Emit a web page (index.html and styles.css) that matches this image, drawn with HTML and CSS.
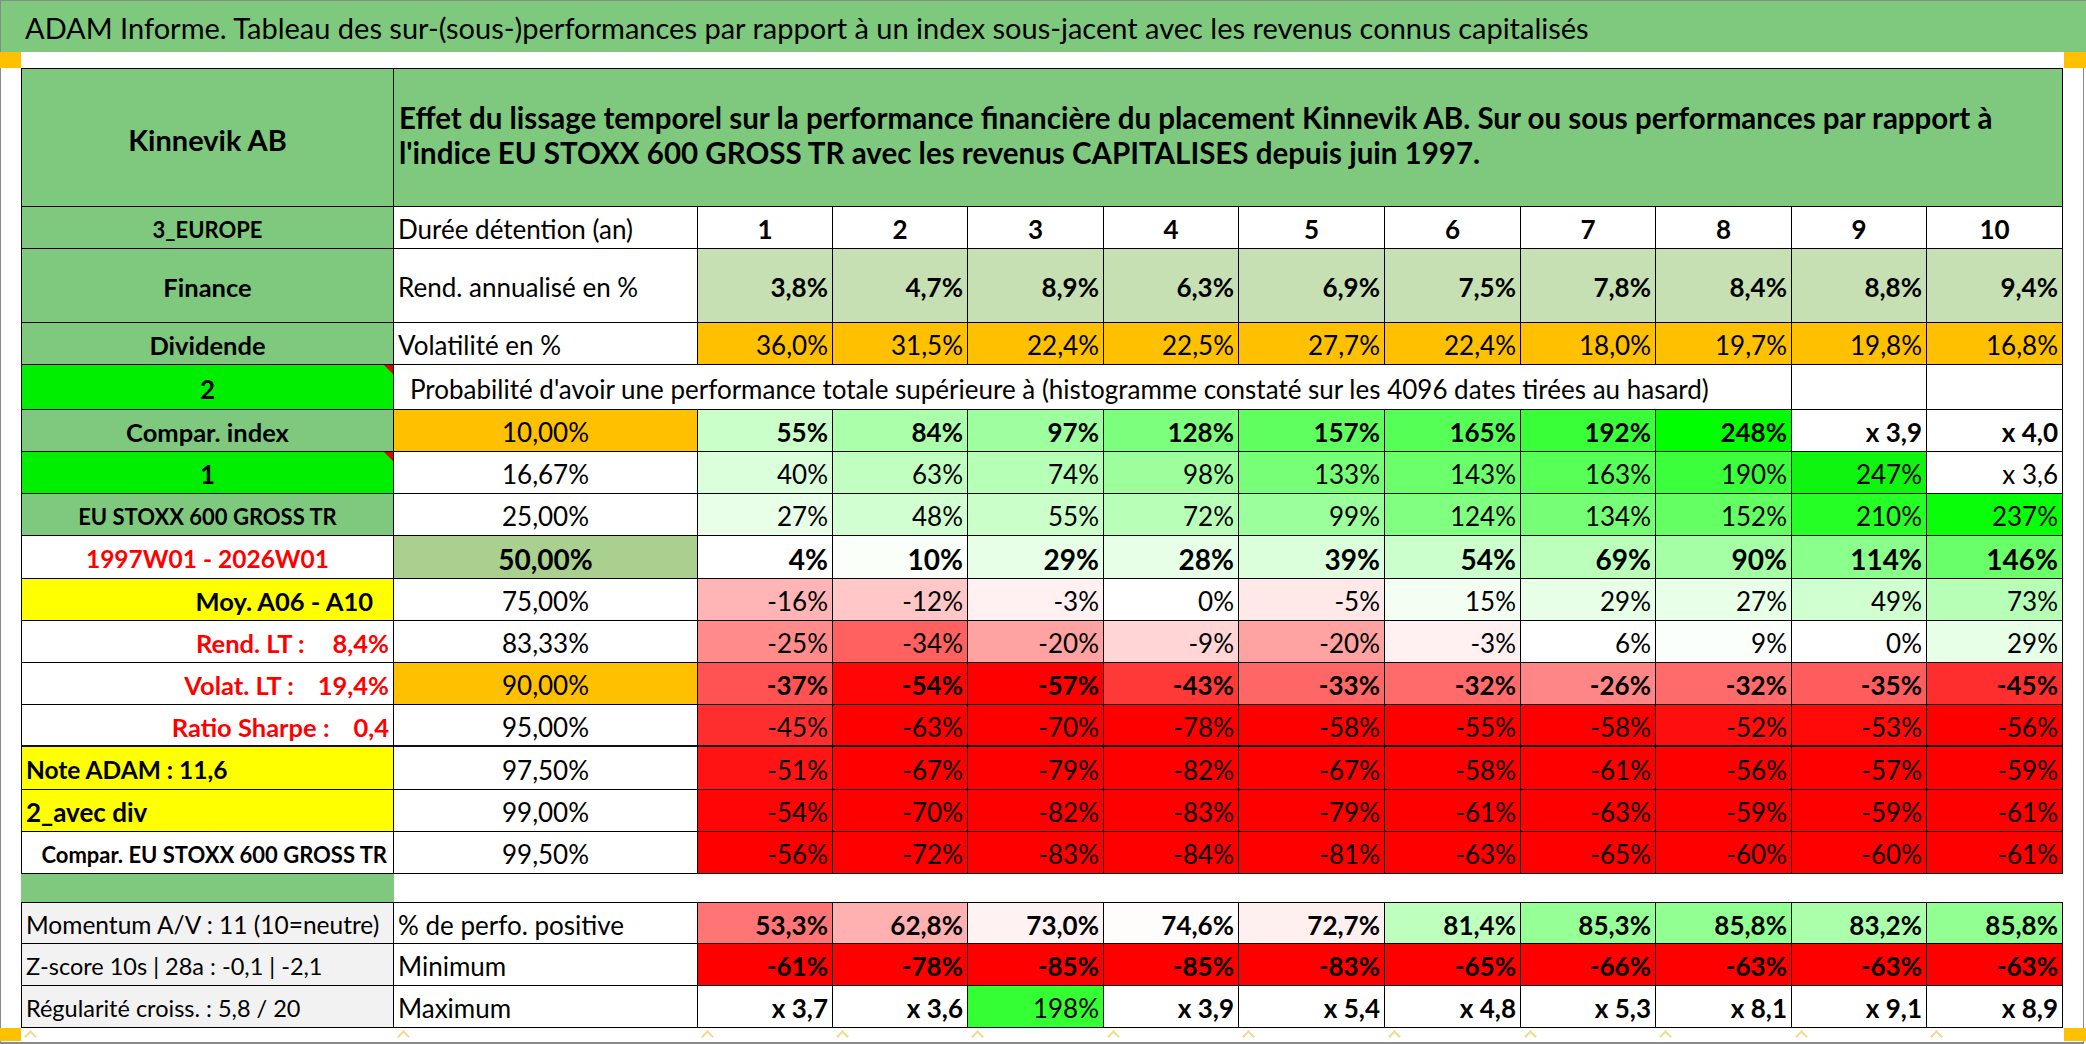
FILE: index.html
```html
<!DOCTYPE html>
<html lang="fr">
<head>
<meta charset="utf-8">
<title>ADAM Informe - Kinnevik AB</title>
<link rel="stylesheet" href="styles.css">
</head>
<body>
<div class="page">
  <div class="title">ADAM Informe. Tableau des sur-(sous-)performances par rapport à un index sous-jacent avec les revenus connus capitalisés</div>
  <div class="main">
    <div class="corner"><span class="sq"></span><span class="sq r"></span></div>
    <div class="sheet">
      <!-- row 1 -->
      <div class="c t l g b ctr kin">Kinnevik AB</div>
      <div class="c t g b hdtext span11">Effet du lissage temporel sur la performance financière du placement Kinnevik AB. Sur ou sous performances par rapport à<br>l'indice EU STOXX 600 GROSS TR avec les revenus CAPITALISES depuis juin 1997.</div>
      <!-- row 2 -->
      <div class="c l g b ctr eur">3_EUROPE</div>
      <div class="c lab">Durée détention (an)</div>
      <div class="c ctr b">1</div><div class="c ctr b">2</div><div class="c ctr b">3</div><div class="c ctr b">4</div><div class="c ctr b">5</div><div class="c ctr b">6</div><div class="c ctr b">7</div><div class="c ctr b">8</div><div class="c ctr b">9</div><div class="c ctr b">10</div>
      <!-- row 3 -->
      <div class="c l g b ctr lbl">Finance</div>
      <div class="c lab">Rend. annualisé en %</div>
      <div class="c rt b lg">3,8%</div><div class="c rt b lg">4,7%</div><div class="c rt b lg">8,9%</div><div class="c rt b lg">6,3%</div><div class="c rt b lg">6,9%</div><div class="c rt b lg">7,5%</div><div class="c rt b lg">7,8%</div><div class="c rt b lg">8,4%</div><div class="c rt b lg">8,8%</div><div class="c rt b lg">9,4%</div>
      <!-- row 4 -->
      <div class="c l g b ctr lbl">Dividende</div>
      <div class="c lab">Volatilité en %</div>
      <div class="c rt o">36,0%</div><div class="c rt o">31,5%</div><div class="c rt o">22,4%</div><div class="c rt o">22,5%</div><div class="c rt o">27,7%</div><div class="c rt o">22,4%</div><div class="c rt o">18,0%</div><div class="c rt o">19,7%</div><div class="c rt o">19,8%</div><div class="c rt o">16,8%</div>
      <!-- row 5 -->
      <div class="c l bg b ctr note">2</div>
      <div class="c span9 prob">Probabilité d'avoir une performance totale supérieure à (histogramme constaté sur les 4096 dates tirées au hasard)</div>
      <div class="c"></div><div class="c"></div>
      <!-- row 6 -->
      <div class="c l g b ctr lbl">Compar. index</div>
      <div class="c ctr o">10,00%</div>
      <div class="c rt b" style="background:#CAFFCA">55%</div><div class="c rt b" style="background:#ABFFAB">84%</div><div class="c rt b" style="background:#9DFF9D">97%</div><div class="c rt b" style="background:#7CFF7C">128%</div><div class="c rt b" style="background:#5EFF5E">157%</div><div class="c rt b" style="background:#55FF55">165%</div><div class="c rt b" style="background:#38FF38">192%</div><div class="c rt b" style="background:#00FF00">248%</div><div class="c rt b">x 3,9</div><div class="c rt b">x 4,0</div>
      <!-- row 7 -->
      <div class="c l bg b ctr note">1</div>
      <div class="c ctr">16,67%</div>
      <div class="c rt" style="background:#DAFFDA">40%</div><div class="c rt" style="background:#C1FFC1">63%</div><div class="c rt" style="background:#B6FFB6">74%</div><div class="c rt" style="background:#9CFF9C">98%</div><div class="c rt" style="background:#77FF77">133%</div><div class="c rt" style="background:#6CFF6C">143%</div><div class="c rt" style="background:#57FF57">163%</div><div class="c rt" style="background:#3AFF3A">190%</div><div class="c rt" style="background:#10F510">247%</div><div class="c rt">x 3,6</div>
      <!-- row 8 -->
      <div class="c l g b ctr sm">EU STOXX 600 GROSS TR</div>
      <div class="c ctr">25,00%</div>
      <div class="c rt" style="background:#E8FFE8">27%</div><div class="c rt" style="background:#D1FFD1">48%</div><div class="c rt" style="background:#CAFFCA">55%</div><div class="c rt" style="background:#B8FFB8">72%</div><div class="c rt" style="background:#9BFF9B">99%</div><div class="c rt" style="background:#81FF81">124%</div><div class="c rt" style="background:#76FF76">134%</div><div class="c rt" style="background:#63FF63">152%</div><div class="c rt" style="background:#25FF25">210%</div><div class="c rt" style="background:#09FF09">237%</div>
      <!-- row 9 -->
      <div class="c l b ctr red per">1997W01 - 2026W01</div>
      <div class="c ctr b big m">50,00%</div>
      <div class="c rt b big">4%</div><div class="c rt b big" style="background:#FAFFFA">10%</div><div class="c rt b big" style="background:#E6FFE6">29%</div><div class="c rt b big" style="background:#E7FFE7">28%</div><div class="c rt b big" style="background:#DBFFDB">39%</div><div class="c rt b big" style="background:#CBFFCB">54%</div><div class="c rt b big" style="background:#BBFFBB">69%</div><div class="c rt b big" style="background:#A5FFA5">90%</div><div class="c rt b big" style="background:#8BFF8B">114%</div><div class="c rt b big" style="background:#69FF69">146%</div>
      <!-- row 10 -->
      <div class="c l y b rt moy lbl">Moy. A06 - A10</div>
      <div class="c ctr">75,00%</div>
      <div class="c rt" style="background:#FFB5B5">-16%</div><div class="c rt" style="background:#FFC7C7">-12%</div><div class="c rt" style="background:#FFF1F1">-3%</div><div class="c rt">0%</div><div class="c rt" style="background:#FFE8E8">-5%</div><div class="c rt" style="background:#F4FFF4">15%</div><div class="c rt" style="background:#E6FFE6">29%</div><div class="c rt" style="background:#E8FFE8">27%</div><div class="c rt" style="background:#D0FFD0">49%</div><div class="c rt" style="background:#B7FFB7">73%</div>
      <!-- row 11 -->
      <div class="c l b rt red lbl">Rend. LT :<span class="ltv wide">8,4%</span></div>
      <div class="c ctr">83,33%</div>
      <div class="c rt" style="background:#FF8B8B">-25%</div><div class="c rt" style="background:#FF6161">-34%</div><div class="c rt" style="background:#FFA2A2">-20%</div><div class="c rt" style="background:#FFD5D5">-9%</div><div class="c rt" style="background:#FFA2A2">-20%</div><div class="c rt" style="background:#FFF1F1">-3%</div><div class="c rt" style="background:#FEFFFE">6%</div><div class="c rt" style="background:#FBFFFB">9%</div><div class="c rt">0%</div><div class="c rt" style="background:#E6FFE6">29%</div>
      <!-- row 12 -->
      <div class="c l b rt red lbl">Volat. LT :<span class="ltv">19,4%</span></div>
      <div class="c ctr o">90,00%</div>
      <div class="c rt b" style="background:#FF5353">-37%</div><div class="c rt b" style="background:#FF0505">-54%</div><div class="c rt b rd">-57%</div><div class="c rt b" style="background:#FF3838">-43%</div><div class="c rt b" style="background:#FF6666">-33%</div><div class="c rt b" style="background:#FF6B6B">-32%</div><div class="c rt b" style="background:#FF8686">-26%</div><div class="c rt b" style="background:#FF6B6B">-32%</div><div class="c rt b" style="background:#FF5D5D">-35%</div><div class="c rt b" style="background:#FF2E2E">-45%</div>
      <!-- row 13 -->
      <div class="c l b rt red thk lbl">Ratio Sharpe :<span class="ltv">0,4</span></div>
      <div class="c ctr thk">95,00%</div>
      <div class="c rt thk" style="background:#FF2E2E">-45%</div><div class="c rt thk rd">-63%</div><div class="c rt thk rd">-70%</div><div class="c rt thk rd">-78%</div><div class="c rt thk rd">-58%</div><div class="c rt thk rd">-55%</div><div class="c rt thk rd">-58%</div><div class="c rt thk" style="background:#FF0E0E">-52%</div><div class="c rt thk" style="background:#FF0909">-53%</div><div class="c rt thk rd">-56%</div>
      <!-- row 14 -->
      <div class="c l y b left nadam">Note ADAM : 11,6</div>
      <div class="c ctr">97,50%</div>
      <div class="c rt" style="background:#FF1313">-51%</div><div class="c rt rd">-67%</div><div class="c rt rd">-79%</div><div class="c rt rd">-82%</div><div class="c rt rd">-67%</div><div class="c rt rd">-58%</div><div class="c rt rd">-61%</div><div class="c rt rd">-56%</div><div class="c rt rd">-57%</div><div class="c rt rd">-59%</div>
      <!-- row 15 -->
      <div class="c l y b left">2_avec div</div>
      <div class="c ctr">99,00%</div>
      <div class="c rt" style="background:#FF0505">-54%</div><div class="c rt rd">-70%</div><div class="c rt rd">-82%</div><div class="c rt rd">-83%</div><div class="c rt rd">-79%</div><div class="c rt rd">-61%</div><div class="c rt rd">-63%</div><div class="c rt rd">-59%</div><div class="c rt rd">-59%</div><div class="c rt rd">-61%</div>
      <!-- row 16 -->
      <div class="c l b rt sm2">Compar. EU STOXX 600 GROSS TR</div>
      <div class="c ctr">99,50%</div>
      <div class="c rt rd">-56%</div><div class="c rt rd">-72%</div><div class="c rt rd">-83%</div><div class="c rt rd">-84%</div><div class="c rt rd">-81%</div><div class="c rt rd">-63%</div><div class="c rt rd">-65%</div><div class="c rt rd">-60%</div><div class="c rt rd">-60%</div><div class="c rt rd">-61%</div>
      <!-- row 17 (spacer) -->
      <div class="blank g"></div>
      <div class="blank span11"></div>
      <!-- row 18 -->
      <div class="c l t gr left mom mom1">Momentum A/V : 11 (10=neutre)</div>
      <div class="c t lab">% de perfo. positive</div>
      <div class="c t rt b" style="background:#FF7575">53,3%</div><div class="c t rt b" style="background:#FFB1B1">62,8%</div><div class="c t rt b" style="background:#FFF2F2">73,0%</div><div class="c t rt b" style="background:#FFFCFC">74,6%</div><div class="c t rt b" style="background:#FFF0F0">72,7%</div><div class="c t rt b" style="background:#BEFFBE">81,4%</div><div class="c t rt b" style="background:#96FF96">85,3%</div><div class="c t rt b" style="background:#91FF91">85,8%</div><div class="c t rt b" style="background:#ABFFAB">83,2%</div><div class="c t rt b" style="background:#91FF91">85,8%</div>
      <!-- row 19 -->
      <div class="c l gr left mom">Z-score 10s | 28a : -0,1 | -2,1</div>
      <div class="c lab">Minimum</div>
      <div class="c rt b rd">-61%</div><div class="c rt b rd">-78%</div><div class="c rt b rd">-85%</div><div class="c rt b rd">-85%</div><div class="c rt b rd">-83%</div><div class="c rt b rd">-65%</div><div class="c rt b rd">-66%</div><div class="c rt b rd">-63%</div><div class="c rt b rd">-63%</div><div class="c rt b rd">-63%</div>
      <!-- row 20 -->
      <div class="c l gr left mom">Régularité croiss. : 5,8 / 20</div>
      <div class="c lab">Maximum</div>
      <div class="c rt b">x 3,7</div><div class="c rt b">x 3,6</div><div class="c rt" style="background:#33FF33">198%</div><div class="c rt b">x 3,9</div><div class="c rt b">x 5,4</div><div class="c rt b">x 4,8</div><div class="c rt b">x 5,3</div><div class="c rt b">x 8,1</div><div class="c rt b">x 9,1</div><div class="c rt b">x 8,9</div>
    </div>
    <div class="foot">
      <span class="sq"></span>
      <div class="ticks"><i></i><i></i><i></i><i></i><i></i><i></i><i></i><i></i><i></i><i></i><i></i><i></i></div>
      <span class="sq r"></span>
    </div>
  </div>
</div>
</body>
</html>
```

FILE: styles.css
```css
* { box-sizing: border-box; }
html, body { margin: 0; padding: 0; background: #fff; }
body { font-family: Lato, "Liberation Sans", sans-serif; color: #000; }

.page {
  width: 2086px;
  height: 1044px;
  display: flex;
  flex-direction: column;
  overflow: hidden;
}

.title {
  flex: none;
  height: 52px;
  background: #7FC97F;
  border-top: 1px solid #8a8a8a;
  border-left: 1px solid #8a8a8a;
  padding: 1px 0 0 24px;
  display: flex;
  align-items: center;
  font-size: 29px;
  white-space: nowrap;
}

.main {
  flex: 1;
  width: 2084px;
  border-left: 1px solid #8a8a8a;
  border-right: 1px solid #8a8a8a;
  border-bottom: 2px solid #8a8a8a;
  display: flex;
  flex-direction: column;
}

.corner {
  flex: none;
  height: 16px;
  display: flex;
  justify-content: space-between;
}
.sq { display: block; width: 21px; background: #FFC000; margin-left: -1px; }
.sq.r { width: 22px; margin-left: auto; margin-right: -3px; }

.sheet {
  margin-left: 20px;
  display: grid;
  grid-template-columns: 373px 304px 135px 135px 136px 135px 146px 136px 135px 136px 135px 136px;
  grid-template-rows: 139px 42px 74px 42px 45px 42px 42px 42px 43px 42px 42px 42px 42px 43px 42px 42px 28px 42px 42px 42px;
}

.c {
  position: relative;
  display: flex;
  align-items: center;
  padding: 3px 4px 0;
  border-right: 1px solid #000;
  border-bottom: 1px solid #000;
  background: #fff;
  font-size: 26px;
  white-space: nowrap;
  overflow: hidden;
}
.c.t { border-top: 1px solid #000; }
.c.l { border-left: 1px solid #000; }
.c.thk { border-bottom: 2px solid #111; }

.span11 { grid-column: span 11; }
.span9 { grid-column: span 9; }

.b { font-weight: 700; }
.ctr { justify-content: center; }
.rt { justify-content: flex-end; }
.left { justify-content: flex-start; }
.lab { justify-content: flex-start; }
.big { font-size: 28px; }
.red { color: #FF0000; }
.lbl { font-size: 25.5px; }
.eur { font-size: 22px; }
.per { font-size: 24.5px; }
.sm { font-size: 22px; }
.sm2 { font-size: 22px; padding-right: 6px; }
.mom { font-size: 23.5px; }
.mom1 { font-size: 24.5px; }
.nadam { font-size: 24.5px; }
.moy { padding-right: 20px; }
.ltv { margin-left: 24px; }
.ltv.wide { margin-left: 28px; }

.g { background: #7FC97F; }
.lg { background: #C6E0B4; }
.o { background: #FFC000; }
.y { background: #FFFF00; }
.bg { background: #00EE00; }
.gr { background: #F2F2F2; }
.m { background: #A9D08E; }
.rd { background: #FF0000; }

.kin { font-size: 29px; }
.hdtext {
  display: block;
  padding: 31px 4px 0 5px;
  font-size: 29.5px;
  line-height: 35px;
}
.prob { padding-left: 16px; }

.note::after {
  content: "";
  position: absolute;
  top: 0;
  right: 0;
  border-left: 9px solid transparent;
  border-top: 9px solid #E00000;
}

.blank { background: #fff; }
.blank.g { background: #7FC97F; }

.foot {
  flex: none;
  height: 14px;
  display: flex;
}
.foot .sq { height: 13px; }
.ticks {
  width: 2042px;
  display: grid;
  grid-template-columns: 373px 304px 135px 135px 136px 135px 146px 136px 135px 136px 135px 136px;
}
.ticks i::before {
  content: "";
  display: block;
  width: 7px;
  height: 7px;
  margin: 4px 0 0 5px;
  border-top: 2px solid #F1DA8A;
  border-left: 2px solid #F1DA8A;
  transform: rotate(45deg);
}
```
